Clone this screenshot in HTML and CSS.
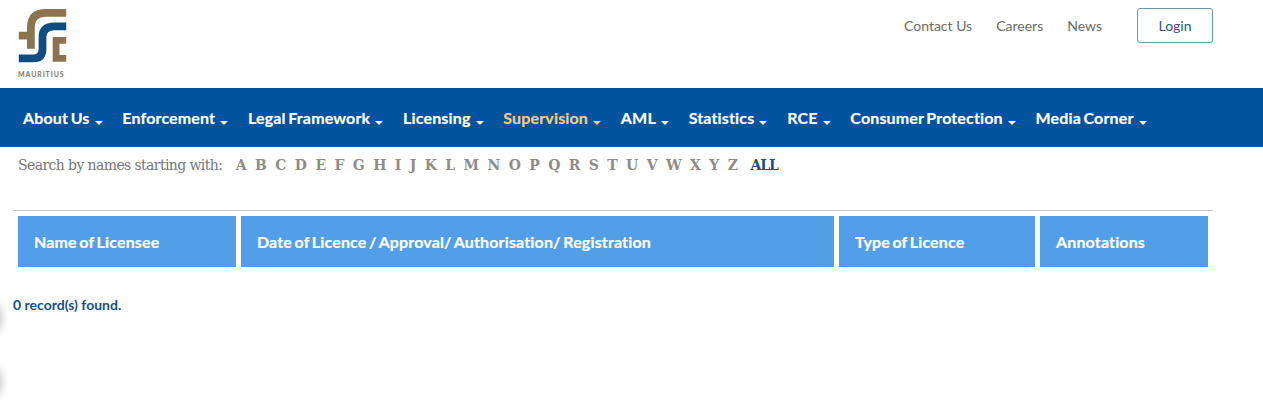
FILE: index.html
```html
<!DOCTYPE html>
<html lang="en">
<head>
    <meta charset="UTF-8">
    <title>Register of Licensees</title>
    <link rel="stylesheet" href="styles.css">
</head>
<body>
    <div class="edge-shadow edge-shadow-top"></div>
    <div class="edge-shadow edge-shadow-bottom"></div>

    <header class="top-bar">
        <a class="logo" href="#">
            <svg class="logo-mark" width="50" height="62" viewBox="18 9 50 62">
                <path class="logo-brown" d="M67 13 H46 Q30.500 13 30.500 28 V50"/>
                <path class="logo-brown" d="M18 36.500 H30"/>
                <path class="logo-blue" d="M67 27 H55 Q42.500 27 42.500 38 V50 Q42.500 60 33 60 H18"/>
                <path class="logo-brown-thin" d="M67 41.500 H56.500 V60 H67"/>
            </svg>
            <span class="logo-text">MAURITIUS</span>
        </a>
        <nav class="top-links">
            <a href="#">Contact Us</a>
            <a href="#">Careers</a>
            <a href="#">News</a>
            <a class="login" href="#">Login</a>
        </nav>
    </header>

    <nav class="main-nav">
        <a href="#">About Us<span class="caret"></span></a>
        <a href="#">Enforcement<span class="caret"></span></a>
        <a href="#">Legal Framework<span class="caret"></span></a>
        <a href="#">Licensing<span class="caret"></span></a>
        <a class="active" href="#">Supervision<span class="caret"></span></a>
        <a href="#">AML<span class="caret"></span></a>
        <a href="#">Statistics<span class="caret"></span></a>
        <a href="#">RCE<span class="caret"></span></a>
        <a href="#">Consumer Protection<span class="caret"></span></a>
        <a href="#">Media Corner<span class="caret"></span></a>
    </nav>

    <div class="alpha-search">
        <span class="alpha-label">Search by names starting with:</span>
        <div class="alpha-letters">
            <a href="#">A</a><a href="#">B</a><a href="#">C</a><a href="#">D</a><a href="#">E</a><a href="#">F</a><a href="#">G</a><a href="#">H</a><a href="#">I</a><a href="#">J</a><a href="#">K</a><a href="#">L</a><a href="#">M</a><a href="#">N</a><a href="#">O</a><a href="#">P</a><a href="#">Q</a><a href="#">R</a><a href="#">S</a><a href="#">T</a><a href="#">U</a><a href="#">V</a><a href="#">W</a><a href="#">X</a><a href="#">Y</a><a href="#">Z</a>
            <a class="all" href="#">ALL</a>
        </div>
    </div>

    <div class="results">
        <table class="licensees">
            <thead>
                <tr>
                    <th class="col-name">Name of Licensee</th>
                    <th class="col-date">Date of Licence / Approval/ Authorisation/ Registration</th>
                    <th class="col-type">Type of Licence</th>
                    <th class="col-notes">Annotations</th>
                </tr>
            </thead>
        </table>
        <p class="record-count">0 record(s) found.</p>
    </div>
</body>
</html>
```

FILE: styles.css
```css
body {
    margin: 0;
    font-family: Lato, "Open Sans", sans-serif;
    background: #fff;
    overflow: hidden;
}

a {
    text-decoration: none;
}

.top-bar {
    height: 88px;
    display: flex;
    justify-content: space-between;
    align-items: flex-start;
    padding: 0 50px 0 18px;
}

.logo {
    display: flex;
    flex-direction: column;
    padding-top: 9px;
    width: 50px;
}

.logo-mark {
    display: block;
    height: 60px;
}

.logo-brown, .logo-blue, .logo-brown-thin {
    fill: none;
    stroke-width: 8px;
}

.logo-brown {
    stroke: #8d7450;
}

.logo-blue {
    stroke: #0f4c81;
}

.logo-brown-thin {
    stroke: #8d7450;
    stroke-width: 7px;
}

.logo-text {
    font-size: 7px;
    font-weight: 700;
    letter-spacing: 0.900px;
    line-height: 9px;
    padding-top: 1px;
    color: #7d766a;
    white-space: nowrap;
}

.top-links {
    display: flex;
    align-items: center;
    padding-top: 8px;
    gap: 24px;
}

.top-links a {
    font-size: 14px;
    color: #6b6b6b;
}

.top-links .login {
    margin-left: 11px;
    width: 74px;
    height: 33px;
    line-height: 33px;
    text-align: center;
    border: 1px solid #6d96a8;
    border-radius: 3px;
    color: #2a5a7c;
}

.main-nav {
    height: 59px;
    background: #00539c;
    display: flex;
    align-items: center;
    padding-left: 23px;
    gap: 19.800px;
}

.main-nav a {
    font-size: 16px;
    font-weight: 700;
    letter-spacing: 0.150px;
    word-spacing: -1.500px;
    -webkit-text-stroke: 0.2px;
    color: #fff;
    white-space: nowrap;
}

.main-nav .active {
    color: #f0cd8e;
}

.caret {
    display: inline-block;
    width: 0;
    height: 0;
    margin-left: 5px;
    vertical-align: -1px;
    border-top: 4px solid currentColor;
    border-left: 4px solid transparent;
    border-right: 4px solid transparent;
}

.alpha-search {
    display: flex;
    align-items: center;
    height: 36px;
    padding-left: 18px;
    font-family: "DejaVu Serif", serif;
    padding-bottom: 1px;
}

.alpha-label {
    font-size: 14px;
    letter-spacing: -0.600px;
    color: #777;
    margin-right: 13.500px;
}

.alpha-letters {
    display: flex;
    gap: 8.400px;
    font-size: 14px;
    font-weight: 700;
}

.alpha-letters a {
    color: #8f8c88;
}

.alpha-letters .all {
    color: #1c4f86;
    margin-left: 4px;
    letter-spacing: -1px;
}

.results {
    margin: 26px 50px 0 13px;
    border-top: 1px solid #c8c8c8;
}

.licensees {
    width: 100%;
    table-layout: fixed;
    border-collapse: separate;
    border-spacing: 5px;
}

.licensees th {
    height: 51px;
    padding: 0 16px;
    background: #529fe8;
    color: #fff;
    font-size: 16px;
    font-weight: 700;
    letter-spacing: 0.150px;
    word-spacing: -1.500px;
    -webkit-text-stroke: 0.2px;
    text-align: left;
    white-space: nowrap;
}

.col-name {
    width: 186px;
}

.col-date {
    width: 561px;
}

.col-type {
    width: 164px;
}

.record-count {
    margin: 24px 0 0;
    font-size: 14px;
    font-weight: 700;
    color: #1b4f7c;
}

/* faint blurred smudges on the left edge of the window */
.edge-shadow {
    position: absolute;
    left: -9px;
    width: 10px;
    height: 28px;
    border-radius: 50%;
    background: #bbb;
    filter: blur(4px);
}

.edge-shadow-top {
    top: 304px;
}

.edge-shadow-bottom {
    top: 368px;
}
```
